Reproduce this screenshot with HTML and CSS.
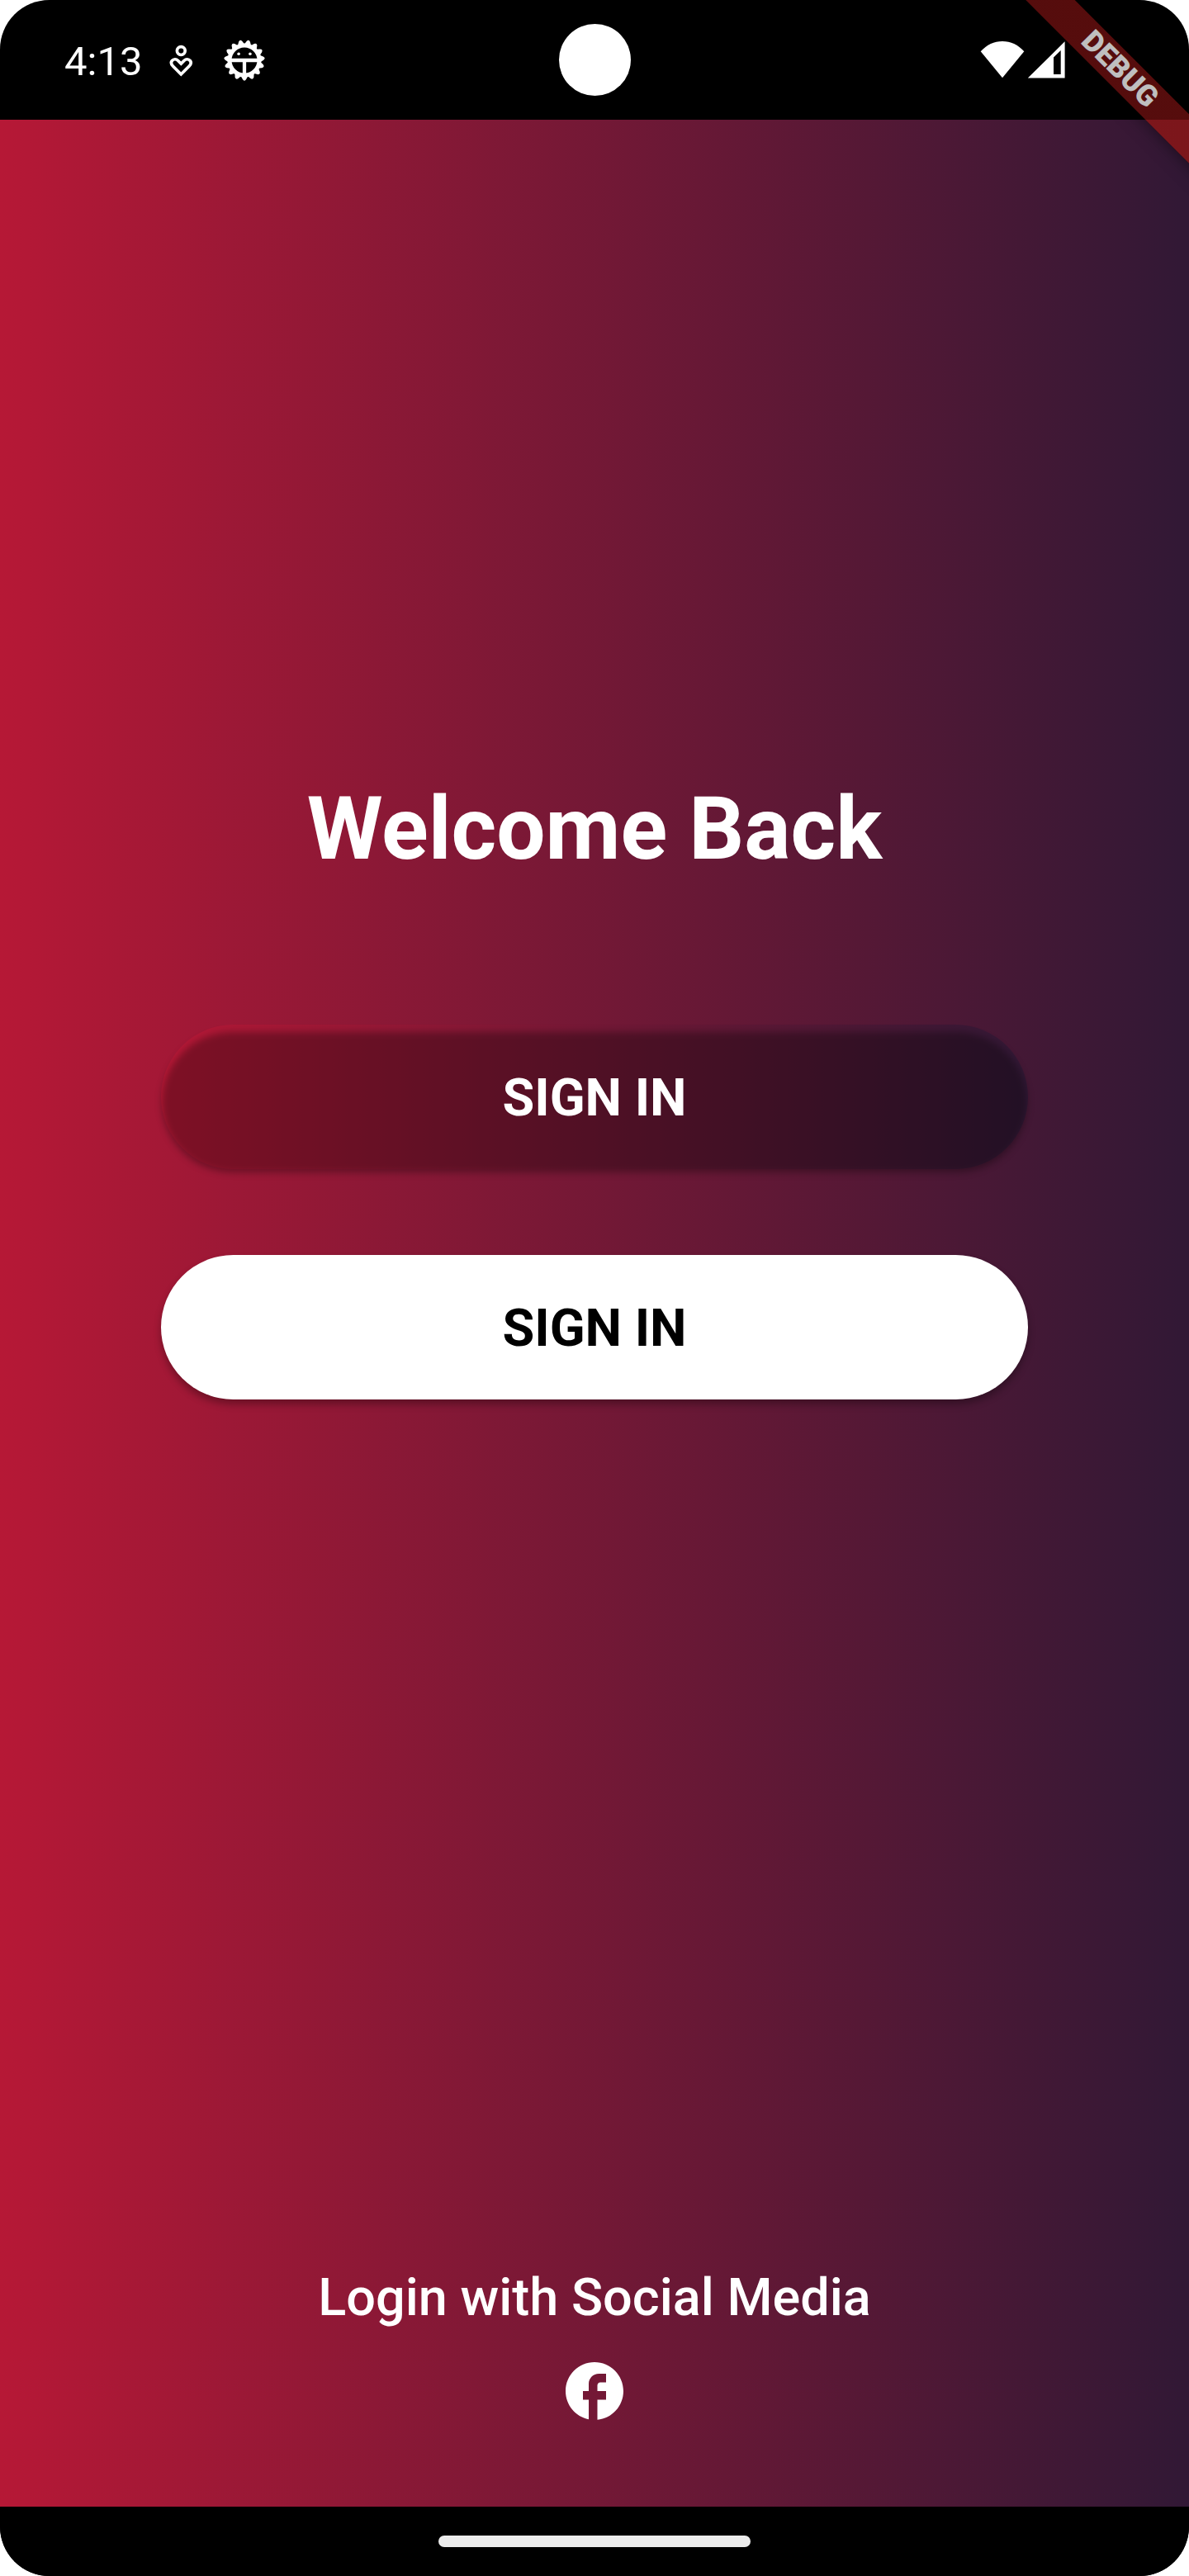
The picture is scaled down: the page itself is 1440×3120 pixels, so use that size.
FILE: index.html
```html
<!DOCTYPE html>
<html lang="en">
<head>
<meta charset="utf-8">
<title>Welcome Back</title>
<link rel="stylesheet" href="styles.css">
</head>
<body>
<div class="phone">
  <header class="status">
    <div class="status-left">
      <span class="clock">4:13</span>
      <svg class="icon-care" viewBox="0 0 30 44" fill="none" stroke="#fff" stroke-width="3.7">
        <circle cx="15.3" cy="10.6" r="4.9"/>
        <path d="M15.3 39 5.6 29.3C3 26.7 2.9 24.3 4.4 22.5C6.3 20.2 9.5 20.3 11.4 22.2L15.3 26.1L19.2 22.2C21.1 20.3 24.3 20.2 26.2 22.5C27.7 24.3 27.6 26.7 25 29.3Z"/>
      </svg>
      <svg class="icon-gear" viewBox="-26 -26 52 52" fill="none" stroke="#fff">
        <circle r="18" stroke-width="5"/>
        <g fill="#fff" stroke="none">
          <path id="tooth" d="M-4.2 19L-2.2 23.1Q0 26.3 2.2 23.1L4.2 19Z"/>
          <use href="#tooth" transform="rotate(24)"/><use href="#tooth" transform="rotate(48)"/>
          <use href="#tooth" transform="rotate(72)"/><use href="#tooth" transform="rotate(96)"/>
          <use href="#tooth" transform="rotate(120)"/><use href="#tooth" transform="rotate(144)"/>
          <use href="#tooth" transform="rotate(168)"/><use href="#tooth" transform="rotate(192)"/>
          <use href="#tooth" transform="rotate(216)"/><use href="#tooth" transform="rotate(240)"/>
          <use href="#tooth" transform="rotate(264)"/><use href="#tooth" transform="rotate(288)"/>
          <use href="#tooth" transform="rotate(312)"/><use href="#tooth" transform="rotate(336)"/>
        </g>
        <path d="M-17 0H17M0 0V17" stroke-width="4.3"/>
        <g fill="#fff" stroke="none"><circle cx="-6.9" cy="-7.8" r="1.8"/><circle cx="6.9" cy="-7.8" r="1.8"/></g>
      </svg>
    </div>
    <div class="camera"></div>
    <div class="status-right">
      <svg class="icon-wifi" viewBox="0 0 54 46" fill="#fff"><path d="M27 45.3.7 13.3C8 5 17 1 27 1S46 5 53.3 13.3Z"/></svg>
      <svg class="icon-signal" viewBox="0 0 46 46" fill="#fff" fill-rule="evenodd"><path d="M.8 45.6 45.6 1.2V45.6ZM32 20.5V41H40.7V12Z"/></svg>
    </div>
  </header>
  <main class="screen">
    <h1 class="title">Welcome Back</h1>
    <button class="btn btn-ghost"><span>SIGN IN</span></button>
    <button class="btn btn-solid"><span>SIGN IN</span></button>
    <div class="social">
      <p class="social-label">Login with Social Media</p>
      <svg class="icon-facebook" viewBox="0 0 24 24" fill="#fff"><path d="M22 12c0-5.52-4.48-10-10-10S2 6.48 2 12c0 4.84 3.44 8.87 8 9.8V15H8v-3h2V9.5C10 7.57 11.57 6 13.5 6H16v3h-2c-.55 0-1 .45-1 1v2h3v3h-3v6.95c5.05-.5 9-4.76 9-9.95z"/></svg>
    </div>
  </main>
  <footer class="nav"><div class="handle"></div></footer>
  <div class="debug">DEBUG</div>
</div>
</body>
</html>
```
FILE: styles.css
```css
* { box-sizing: border-box; }
body { margin: 0; background: #fff; font-family: Roboto, "Liberation Sans", sans-serif; color: #fff; }
.phone {
  position: relative;
  display: flex;
  flex-direction: column;
  width: 1440px;
  height: 3120px;
  border-radius: 60px;
  overflow: hidden;
  background: #000;
  isolation: isolate;
}
.status {
  position: relative;
  z-index: 2;
  display: grid;
  grid-template-columns: 1fr 86px 1fr;
  align-items: center;
  height: 145px;
  flex: none;
  background: rgba(0, 0, 0, .25);
}
.status-left, .status-right { display: flex; align-items: center; }
.status-left { padding-left: 78px; }
.clock { font-size: 49px; line-height: 58px; width: 126px; padding-top: 5px; }
.icon-care { width: 30px; height: 44px; }
.icon-gear { width: 52px; height: 52px; margin: 1px 0 0 36px; }
.camera { width: 87px; height: 87px; border-radius: 50%; background: #fff; }
.status-right { justify-content: flex-end; gap: 3px; padding: 0 150px 2px 0; }
.icon-wifi { width: 54px; height: 46px; }
.icon-signal { width: 46px; height: 46px; }

.screen {
  display: flex;
  flex-direction: column;
  align-items: center;
  flex: 1;
  background: linear-gradient(90deg, #b61836, #311835);
}
.title { margin: 798px 0 0; font-size: 105px; line-height: 123px; font-weight: 700; }
.btn {
  position: relative;
  width: 1050px;
  height: 175px;
  padding: 2px 0 0;
  border: 0;
  border-radius: 88px;
  font: 700 63px/74px Roboto, "Liberation Sans", sans-serif;
  color: #fff;
}
.btn span { position: relative; }
.btn-ghost { margin-top: 175px; background: linear-gradient(90deg, #b61836, #311835); }
.btn-ghost::before {
  content: "";
  position: absolute;
  inset: 9px 1px -4px;
  border-radius: 88px;
  background: rgba(0, 0, 0, .3);
  filter: blur(4px);
}
.btn-solid { margin-top: 104px; background: #fff; color: #000; box-shadow: 0 6px 10px rgba(0, 0, 0, .3); }
.social { display: flex; flex-direction: column; align-items: center; margin: auto 0 98px; }
.social-label { margin: 0; font-size: 63px; line-height: 74px; font-weight: 500; }
.icon-facebook { width: 84px; height: 84px; margin-top: 34px; }
.nav { display: flex; justify-content: center; align-items: center; height: 84px; flex: none; background: #000; }
.handle { width: 378px; height: 14px; border-radius: 7px; background: #ececec; }

/* Corner ribbon laid across the status bar and the screen. */
.debug {
  position: absolute;
  z-index: 1;
  left: 1156px;
  top: 63px;
  width: 400px;
  height: 42px;
  transform: rotate(45deg);
  background: linear-gradient(rgba(183, 28, 28, .627), rgba(183, 28, 28, .627)), rgba(0, 0, 0, .5);
  box-shadow: 0 0 21px rgba(0, 0, 0, .5);
  font-size: 35.7px;
  line-height: 40px;
  font-weight: 900;
  text-align: center;
}
```
